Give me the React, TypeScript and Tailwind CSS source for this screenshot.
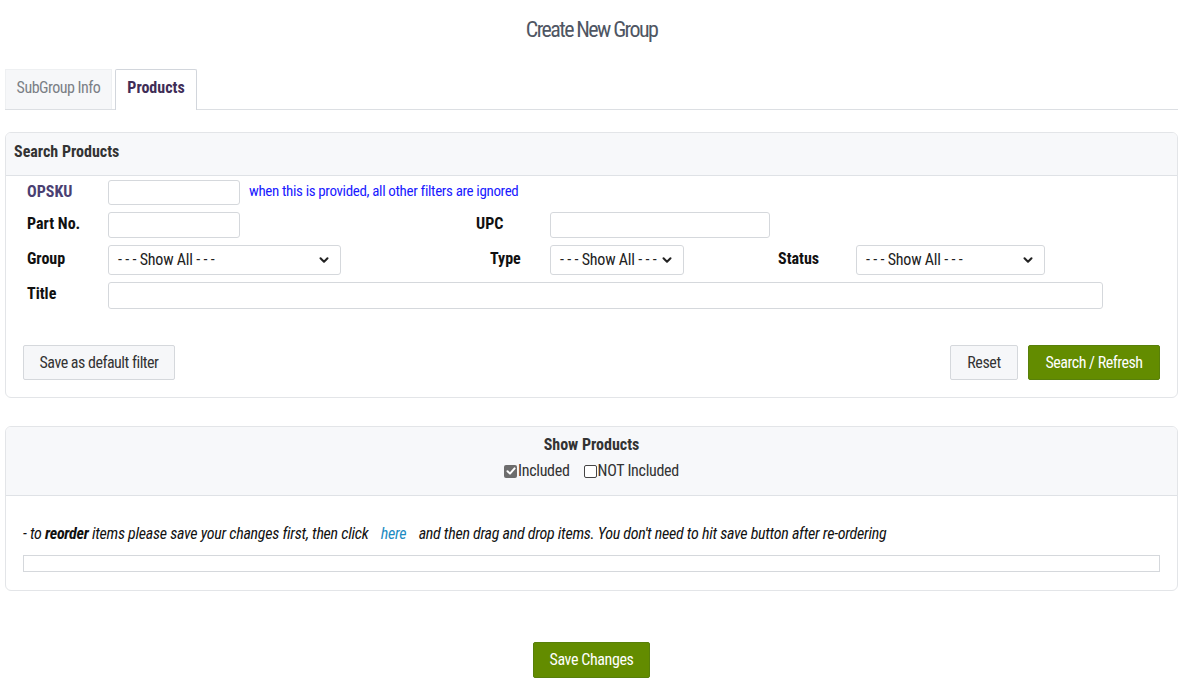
import { ChevronDown } from 'lucide-react';

const FONT = 'font-["Roboto_Condensed","Liberation_Sans_Narrow",Roboto,sans-serif]';

function TextInput({ className }: { className: string }) {
  return <input type="text" className={`border border-[#d5d8dc] rounded-[3px] bg-white outline-none ${className}`} />;
}

function Select({ className }: { className: string }) {
  return (
    <div className={`relative border border-[#d5d8dc] rounded-[3px] bg-white flex items-center ${className}`}>
      <span className="pl-[9px] text-[16px] text-[#222] tracking-[-0.2px]">- - - Show All - - -</span>
      <ChevronDown size={14} strokeWidth={3.5} className="absolute right-[9px] top-1/2 -translate-y-1/2 text-[#222]" />
    </div>
  );
}

function Label({ children, className = '' }: { children: React.ReactNode; className?: string }) {
  return <label className={`font-bold text-[16px] text-[#111] shrink-0 ${className}`}>{children}</label>;
}

function CheckBox({ checked }: { checked: boolean }) {
  return checked ? (
    <span className="inline-flex w-[13px] h-[13px] rounded-[2px] bg-[#6d6d6d] items-center justify-center">
      <svg width="10" height="10" viewBox="0 0 10 10">
        <path d="M1.5 5.2 L4 7.6 L8.6 2.4" stroke="white" strokeWidth="2" fill="none" strokeLinecap="round" strokeLinejoin="round" />
      </svg>
    </span>
  ) : (
    <span className="inline-block w-[13px] h-[13px] rounded-[2px] border border-[#444] bg-white" />
  );
}

export default function App() {
  return (
    <div className={`${FONT} w-[1181px] min-h-[693px] bg-white text-[#333] pl-[5px] pr-[3px]`}>
      {/* Title */}
      <h1 className="text-center text-[22px] text-[#4f5663] pt-[13px] h-[69px] tracking-[-1.6px]">Create New Group</h1>

      {/* Tabs */}
      <div className="flex items-end gap-[3px] h-[41px] border-b border-[#dcdfe3]">
        <div className="h-[40px] w-[107px] bg-[#f6f7f9] border-t border-x border-[#eef0f2] flex items-center justify-center pb-[4px] text-[16px] text-[#7b7f86] tracking-[-0.5px]">
          SubGroup Info
        </div>
        <div className="h-[41px] w-[82px] bg-white border-t border-x border-[#d2d6dc] rounded-t-[2px] -mb-px flex items-center justify-center pb-[4px] font-bold text-[16px] text-[#3f2d57]">
          Products
        </div>
      </div>

      {/* Search Products */}
      <div className="mt-[22px] border border-[#e3e5e8] rounded-[6px] overflow-hidden">
        <div className="h-[43px] bg-[#f7f8fa] border-b border-[#dfe2e6] flex items-center pl-[8px] pb-[4px] font-bold text-[16px] text-[#333]">
          Search Products
        </div>
        <div className="pl-[21px] pt-[4px] pb-[17px] pr-[17px]">
          <div className="flex items-center h-[25px]">
            <Label className="w-[81px] -mt-[2px] !text-[#4a3f72]">OPSKU</Label>
            <TextInput className="w-[132px] h-[25px]" />
            <span className="ml-[9px] -mt-[2px] text-[15px] text-[#1a1aff] tracking-[-0.35px]">when this is provided, all other filters are ignored</span>
          </div>
          <div className="flex items-center h-[26px] mt-[7px]">
            <Label className="w-[81px] -mt-[2px]">Part No.</Label>
            <TextInput className="w-[132px] h-[26px]" />
            <Label className="ml-[236px] w-[74px] -mt-[2px]">UPC</Label>
            <TextInput className="w-[220px] h-[26px]" />
          </div>
          <div className="flex items-center h-[30px] mt-[7px]">
            <Label className="w-[81px] -mt-[2px]">Group</Label>
            <Select className="w-[233px] h-[30px]" />
            <Label className="ml-[149px] w-[60px] -mt-[2px]">Type</Label>
            <Select className="w-[134px] h-[30px]" />
            <Label className="ml-[94px] w-[78px] -mt-[2px]">Status</Label>
            <Select className="w-[189px] h-[30px]" />
          </div>
          <div className="flex items-start h-[27px] mt-[7px]">
            <Label className="w-[81px]">Title</Label>
            <TextInput className="w-[995px] h-[27px]" />
          </div>
          <div className="flex items-center mt-[36px] -ml-[4px]">
            <button className="h-[35px] w-[152px] bg-[#f6f7f9] border border-[#d5d8dc] rounded-[2px] text-[16px] text-[#333] tracking-[-0.5px]">
              Save as default filter
            </button>
            <div className="ml-auto flex gap-[10px]">
              <button className="h-[35px] w-[68px] bg-[#f6f7f9] border border-[#d5d8dc] rounded-[2px] text-[16px] text-[#333] tracking-[-0.4px]">
                Reset
              </button>
              <button className="h-[35px] w-[132px] bg-[#638c00] border border-[#58800a] rounded-[2px] text-[16px] text-white tracking-[-0.5px]">
                Search / Refresh
              </button>
            </div>
          </div>
        </div>
      </div>

      {/* Show Products */}
      <div className="mt-[28px] border border-[#e3e5e8] rounded-[6px] overflow-hidden">
        <div className="h-[69px] bg-[#f7f8fa] border-b border-[#dfe2e6] flex flex-col items-center pt-[6px]">
          <div className="font-bold text-[16px] text-[#333]">Show Products</div>
          <div className="flex items-center mt-[2px] text-[16px] text-[#333] tracking-[-0.3px]">
            <CheckBox checked />
            <span className="ml-[1px]">Included</span>
            <span className="ml-[14px] flex"><CheckBox checked={false} /></span>
            <span className="ml-[1px]">NOT Included</span>
          </div>
        </div>
        <div className="px-[17px] pt-[26px] pb-[18px]">
          <p className="italic text-[16px] text-[#111] tracking-[-0.27px]">
            - to <b>reorder</b> items please save your changes first, then click{' '}
            <span className="text-[#1b8ac2] mx-[9px]">here</span> and then drag and drop items. You don't need to hit save button after re-ordering
          </p>
          <div className="mt-[9px] h-[17px] border border-[#d5d8dc]" />
        </div>
      </div>

      {/* Save */}
      <div className="flex justify-center mt-[51px]">
        <button className="h-[36px] w-[117px] bg-[#638c00] border border-[#58800a] rounded-[2px] text-[16px] text-white tracking-[-0.4px]">
          Save Changes
        </button>
      </div>
    </div>
  );
}
